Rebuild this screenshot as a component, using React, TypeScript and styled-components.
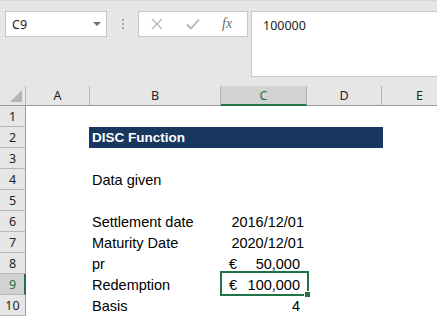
import React from 'react';
import styled, { createGlobalStyle } from 'styled-components';

const GlobalStyle = createGlobalStyle`
  html, body {
    margin: 0;
    padding: 0;
    background: #ffffff;
    overflow: hidden;
  }
`;

const COLS = ['A', 'B', 'C', 'D', 'E'];
const GREEN = '#217346';

type Row = {
  label?: string;
  value?: string;
  currency?: boolean;
  title?: string;
  pad?: number;
};

const rows: Row[] = [
  {},
  { title: 'DISC Function' },
  {},
  { label: 'Data given' },
  {},
  { label: 'Settlement date', value: '2016/12/01', pad: 3 },
  { label: 'Maturity Date', value: '2020/12/01', pad: 3 },
  { label: 'pr', value: '50,000', currency: true, pad: 7 },
  { label: 'Redemption', value: '100,000', currency: true, pad: 7 },
  { label: 'Basis', value: '4', pad: 7 },
];

const Page = styled.div`
  width: 437px;
  height: 317px;
  overflow: hidden;
  display: flex;
  flex-direction: column;
  background: #ffffff;
`;

const Toolbar = styled.div`
  height: 86px;
  flex: none;
  background: #e6e6e6;
  border-top: 1px solid #d6d6d6;
  display: flex;
  align-items: flex-start;
  padding: 10px 0 0 5px;
  box-sizing: border-box;
`;

const NameBox = styled.div`
  width: 102px;
  height: 26px;
  box-sizing: border-box;
  background: #ffffff;
  border: 1px solid #c6c6c6;
  display: flex;
  align-items: center;
  justify-content: space-between;
  padding: 0 5px 0 6px;
  font-family: 'Noto Sans', sans-serif;
  font-size: 12.5px;
  color: #222222;
`;

const DropArrow = styled.span`
  width: 0;
  height: 0;
  border-left: 4px solid transparent;
  border-right: 4px solid transparent;
  border-top: 4px solid #707070;
`;

const Grip = styled.div`
  width: 31px;
  height: 26px;
  display: flex;
  flex-direction: column;
  align-items: center;
  justify-content: center;
  gap: 2px;
`;

const GripDot = styled.span`
  width: 2px;
  height: 2px;
  background: #a8a8a8;
`;

const FxButtons = styled.div`
  width: 110px;
  height: 26px;
  box-sizing: border-box;
  background: #ffffff;
  border: 1px solid #c6c6c6;
  display: flex;
  align-items: center;
  padding: 0 0 0 12px;
`;

const IconSlot = styled.span<{ $gap: number }>`
  display: flex;
  margin-right: ${(p) => p.$gap}px;
`;

const Fx = styled.span`
  font-family: 'Liberation Serif', serif;
  font-style: italic;
  font-size: 14px;
  color: #6a6a6a;
`;

const FormulaBar = styled.div`
  flex: 1;
  height: 66px;
  margin-left: 3px;
  box-sizing: border-box;
  background: #ffffff;
  border: 1px solid #c6c6c6;
  border-right: none;
  padding: 5px 0 0 11px;
  font-family: 'Noto Sans', sans-serif;
  font-size: 12.5px;
  color: #222222;
`;

const Sheet = styled.div`
  display: grid;
  grid-template-columns: 26px 64px 131px 86px 75px 76px;
  grid-template-rows: 20px repeat(10, 21px);
`;

const Corner = styled.div`
  background: #e6e6e6;
  border-right: 1px solid #b6b6b6;
  border-bottom: 1px solid #9b9b9b;
  position: relative;
  &::after {
    content: '';
    position: absolute;
    right: 3px;
    bottom: 3px;
    width: 0;
    height: 0;
    border-left: 12px solid transparent;
    border-bottom: 12px solid #b4b4b4;
  }
`;

const ColHead = styled.div<{ $active?: boolean }>`
  background: ${(p) => (p.$active ? '#d2d2d2' : '#e6e6e6')};
  border-right: 1px solid #b6b6b6;
  border-bottom: ${(p) => (p.$active ? `2px solid ${GREEN}` : '1px solid #9b9b9b')};
  display: flex;
  align-items: center;
  justify-content: center;
  font-family: 'Noto Sans', sans-serif;
  font-size: 12.5px;
  color: ${(p) => (p.$active ? GREEN : '#222222')};
  box-sizing: border-box;
  padding-top: ${(p) => (p.$active ? '1px' : '0')};
`;

const RowHead = styled.div<{ $active?: boolean }>`
  background: ${(p) => (p.$active ? '#d2d2d2' : '#e6e6e6')};
  border-right: ${(p) => (p.$active ? `2px solid ${GREEN}` : '1px solid #9b9b9b')};
  border-bottom: 1px solid #b6b6b6;
  box-sizing: border-box;
  display: flex;
  align-items: center;
  justify-content: center;
  padding-left: ${(p) => (p.$active ? '1px' : '0')};
  font-family: 'Noto Sans', sans-serif;
  font-size: 12.5px;
  color: ${(p) => (p.$active ? GREEN : '#222222')};
`;

const Cell = styled.div<{ $right?: boolean; $pad?: number }>`
  position: relative;
  display: flex;
  align-items: flex-end;
  justify-content: ${(p) => (p.$right ? 'flex-end' : 'flex-start')};
  padding: 0 ${(p) => p.$pad ?? 0}px 1px 2px;
  font-family: 'Liberation Sans', Arial, sans-serif;
  font-size: 14.5px;
  line-height: 17px;
  color: #000000;
  white-space: nowrap;
  box-sizing: border-box;
  min-width: 0;
`;

const TitleCell = styled.div`
  grid-column: span 3;
  background: #17375e;
  margin-left: -1px;
  margin-right: -1px;
  display: flex;
  align-items: center;
  padding-left: 3px;
  font-family: 'Liberation Sans', Arial, sans-serif;
  font-weight: bold;
  font-size: 13.5px;
  color: #ffffff;
`;

const Euro = styled.span`
  position: absolute;
  left: 8px;
  bottom: 1px;
`;

const Selection = styled.div`
  position: absolute;
  top: -3px;
  left: -1px;
  right: -2px;
  bottom: -1px;
  border: 2px solid ${GREEN};
  pointer-events: none;
`;

const Handle = styled.span`
  position: absolute;
  right: -4px;
  bottom: -4px;
  width: 5px;
  height: 5px;
  background: ${GREEN};
  border: 1px solid #ffffff;
`;

const XIcon = () => (
  <svg width="12" height="12" viewBox="0 0 12 12">
    <path d="M1 1 L11 11 M11 1 L1 11" stroke="#b4b4b4" strokeWidth="1.4" fill="none" />
  </svg>
);

const CheckIcon = () => (
  <svg width="14" height="12" viewBox="0 0 14 12">
    <path d="M1 6.5 L5 10.5 L13 1.5" stroke="#b4b4b4" strokeWidth="1.8" fill="none" />
  </svg>
);

const App = () => {
  return (
    <Page>
      <GlobalStyle />
      <Toolbar>
        <NameBox>
          C9
          <DropArrow />
        </NameBox>
        <Grip>
          <GripDot />
          <GripDot />
          <GripDot />
        </Grip>
        <FxButtons>
          <IconSlot $gap={23}>
            <XIcon />
          </IconSlot>
          <IconSlot $gap={22}>
            <CheckIcon />
          </IconSlot>
          <Fx>fx</Fx>
        </FxButtons>
        <FormulaBar>100000</FormulaBar>
      </Toolbar>
      <Sheet>
        <Corner />
        {COLS.map((c) => (
          <ColHead key={c} $active={c === 'C'}>
            {c}
          </ColHead>
        ))}
        {rows.map((r, i) => {
          const n = i + 1;
          const selected = n === 9;
          return (
            <React.Fragment key={n}>
              <RowHead $active={selected}>{n}</RowHead>
              <Cell />
              {r.title ? (
                <TitleCell>{r.title}</TitleCell>
              ) : (
                <>
                  <Cell>{r.label}</Cell>
                  <Cell $right $pad={r.pad}>
                    {r.currency && <Euro>€</Euro>}
                    {r.value}
                    {selected && (
                      <Selection>
                        <Handle />
                      </Selection>
                    )}
                  </Cell>
                  <Cell />
                </>
              )}
              <Cell />
            </React.Fragment>
          );
        })}
      </Sheet>
    </Page>
  );
};

export default App;
